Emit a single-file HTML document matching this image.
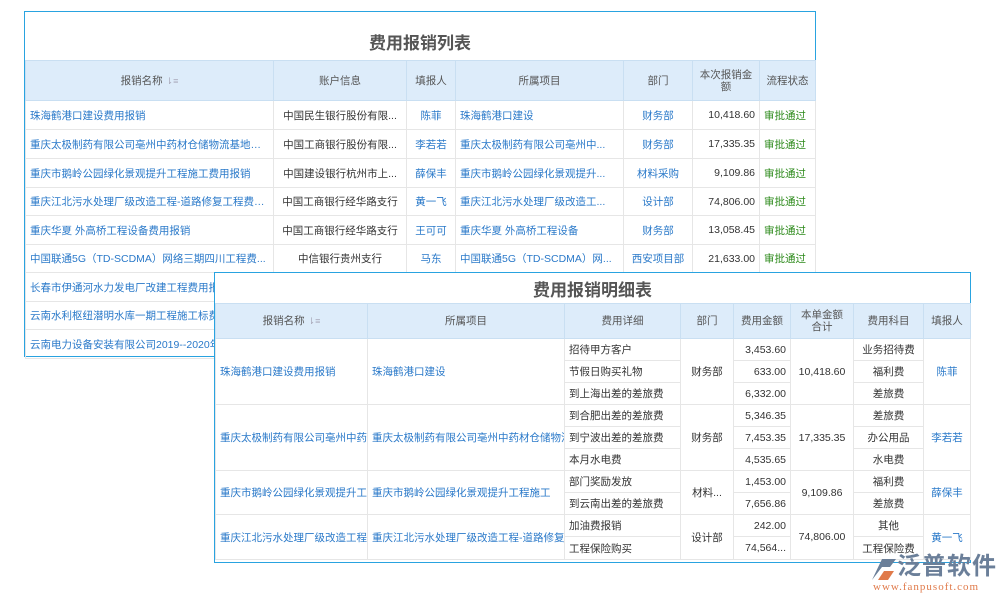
<!DOCTYPE html><html><head><meta charset="utf-8"><style>
*{margin:0;padding:0;box-sizing:border-box}
body{width:1000px;height:600px;background:#fff;position:relative;overflow:hidden;font-family:"Liberation Sans","Noto Sans CJK SC",sans-serif;font-size:10.5px;color:#333}
.p{position:absolute;background:#fff;border:1px solid #29a3e0}
table{border-collapse:collapse;table-layout:fixed;position:absolute;left:0}
td,th{border:1px solid #e6e6e6;white-space:nowrap;overflow:hidden;text-overflow:ellipsis;padding:0 4px;font-weight:normal}
td.k{text-overflow:clip}
th{background:#ddecfa;color:#555;border-color:#c9dff2;line-height:12px;white-space:normal}
.b{color:#2a79c9}.g{color:#2e8b1c}.r{text-align:right}.c{text-align:center}
.t{position:absolute;left:0;right:0;text-align:center;font-size:17px;font-weight:bold;color:#555}
.s{color:#aab;font-size:9px}
</style></head><body>
<div class="p" style="left:24px;top:11px;width:792px;height:346px">
<div class="t" style="top:17px">费用报销列表</div>
<table style="top:48px;width:790px">
<colgroup><col style="width:248px"><col style="width:133px"><col style="width:49px"><col style="width:168px"><col style="width:69px"><col style="width:67px"><col style="width:56px"></colgroup>
<tr style="height:40px"><th>报销名称 <span class="s">⇂≡</span></th><th>账户信息</th><th>填报人</th><th>所属项目</th><th>部门</th><th>本次报销金额</th><th>流程状态</th></tr>
<tr style="height:29px"><td class="b">珠海鹤港口建设费用报销</td><td class="c">中国民生银行股份有限...</td><td class="c b">陈菲</td><td class="b">珠海鹤港口建设</td><td class="c b">财务部</td><td class="r">10,418.60</td><td class="g">审批通过</td></tr>
<tr style="height:29px"><td class="b">重庆太极制药有限公司亳州中药材仓储物流基地项...</td><td class="c">中国工商银行股份有限...</td><td class="c b">李若若</td><td class="b">重庆太极制药有限公司亳州中...</td><td class="c b">财务部</td><td class="r">17,335.35</td><td class="g">审批通过</td></tr>
<tr style="height:29px"><td class="b">重庆市鹅岭公园绿化景观提升工程施工费用报销</td><td class="c">中国建设银行杭州市上...</td><td class="c b">薛保丰</td><td class="b">重庆市鹅岭公园绿化景观提升...</td><td class="c b">材料采购</td><td class="r">9,109.86</td><td class="g">审批通过</td></tr>
<tr style="height:28px"><td class="b">重庆江北污水处理厂级改造工程-道路修复工程费用...</td><td class="c">中国工商银行经华路支行</td><td class="c b">黄一飞</td><td class="b">重庆江北污水处理厂级改造工...</td><td class="c b">设计部</td><td class="r">74,806.00</td><td class="g">审批通过</td></tr>
<tr style="height:29px"><td class="b">重庆华夏 外高桥工程设备费用报销</td><td class="c">中国工商银行经华路支行</td><td class="c b">王可可</td><td class="b">重庆华夏 外高桥工程设备</td><td class="c b">财务部</td><td class="r">13,058.45</td><td class="g">审批通过</td></tr>
<tr style="height:28px"><td class="b">中国联通5G（TD-SCDMA）网络三期四川工程费...</td><td class="c">中信银行贵州支行</td><td class="c b">马东</td><td class="b">中国联通5G（TD-SCDMA）网...</td><td class="c b">西安项目部</td><td class="r">21,633.00</td><td class="g">审批通过</td></tr>
<tr style="height:29px"><td class="b">长春市伊通河水力发电厂改建工程费用报销</td><td></td><td></td><td></td><td></td><td></td><td></td></tr>
<tr style="height:28px"><td class="b">云南水利枢纽潜明水库一期工程施工标费用</td><td></td><td></td><td></td><td></td><td></td><td></td></tr>
<tr style="height:29px"><td class="b">云南电力设备安装有限公司2019--2020年度</td><td></td><td></td><td></td><td></td><td></td><td></td></tr>
</table></div>
<div class="p" style="left:214px;top:272px;width:757px;height:291px">
<div class="t" style="top:3px">费用报销明细表</div>
<table style="top:30px;width:755px">
<colgroup><col style="width:152px"><col style="width:197px"><col style="width:116px"><col style="width:53px"><col style="width:57px"><col style="width:63px"><col style="width:70px"><col style="width:47px"></colgroup>
<tr style="height:35px"><th>报销名称 <span class="s">⇂≡</span></th><th>所属项目</th><th>费用详细</th><th>部门</th><th>费用金额</th><th>本单金额<br>合计</th><th>费用科目</th><th>填报人</th></tr>
<tr style="height:22px"><td rowspan="3" class="b k">珠海鹤港口建设费用报销</td><td rowspan="3" class="b k">珠海鹤港口建设</td><td>招待甲方客户</td><td rowspan="3" class="c">财务部</td><td class="r">3,453.60</td><td rowspan="3" class="c">10,418.60</td><td class="c">业务招待费</td><td rowspan="3" class="c b">陈菲</td></tr>
<tr style="height:22px"><td>节假日购买礼物</td><td class="r">633.00</td><td class="c">福利费</td></tr>
<tr style="height:22px"><td>到上海出差的差旅费</td><td class="r">6,332.00</td><td class="c">差旅费</td></tr>
<tr style="height:22px"><td rowspan="3" class="b k">重庆太极制药有限公司亳州中药材</td><td rowspan="3" class="b k">重庆太极制药有限公司亳州中药材仓储物流</td><td>到合肥出差的差旅费</td><td rowspan="3" class="c">财务部</td><td class="r">5,346.35</td><td rowspan="3" class="c">17,335.35</td><td class="c">差旅费</td><td rowspan="3" class="c b">李若若</td></tr>
<tr style="height:22px"><td>到宁波出差的差旅费</td><td class="r">7,453.35</td><td class="c">办公用品</td></tr>
<tr style="height:22px"><td>本月水电费</td><td class="r">4,535.65</td><td class="c">水电费</td></tr>
<tr style="height:22px"><td rowspan="2" class="b k">重庆市鹅岭公园绿化景观提升工程</td><td rowspan="2" class="b k">重庆市鹅岭公园绿化景观提升工程施工</td><td>部门奖励发放</td><td rowspan="2" class="c">材料...</td><td class="r">1,453.00</td><td rowspan="2" class="c">9,109.86</td><td class="c">福利费</td><td rowspan="2" class="c b">薛保丰</td></tr>
<tr style="height:22px"><td>到云南出差的差旅费</td><td class="r">7,656.86</td><td class="c">差旅费</td></tr>
<tr style="height:22px"><td rowspan="2" class="b k">重庆江北污水处理厂级改造工程-</td><td rowspan="2" class="b k">重庆江北污水处理厂级改造工程-道路修复工</td><td>加油费报销</td><td rowspan="2" class="c">设计部</td><td class="r">242.00</td><td rowspan="2" class="c">74,806.00</td><td class="c">其他</td><td rowspan="2" class="c b">黄一飞</td></tr>
<tr style="height:23px"><td>工程保险购买</td><td class="r">74,564...</td><td class="c">工程保险费</td></tr>
</table></div>
<svg style="position:absolute;left:868px;top:556px" width="32" height="28" viewBox="0 0 32 28"><path d="M4 24 L14 3 L28 3 L22 11 L14 11 Z" fill="#6b7f99"/><path d="M10 24 L16 15 L26 15 L20 24 Z" fill="#e07a4a"/></svg>
<div style="position:absolute;left:897px;top:553px;font-size:24px;color:#6b7f99;letter-spacing:1px;font-weight:bold;line-height:28px;white-space:nowrap">泛普软件</div>
<div style="position:absolute;left:873px;top:581px;font-size:11px;color:#e07a4a;font-family:'Liberation Serif',serif;letter-spacing:1px;white-space:nowrap">www.fanpusoft.com</div>
</body></html>
